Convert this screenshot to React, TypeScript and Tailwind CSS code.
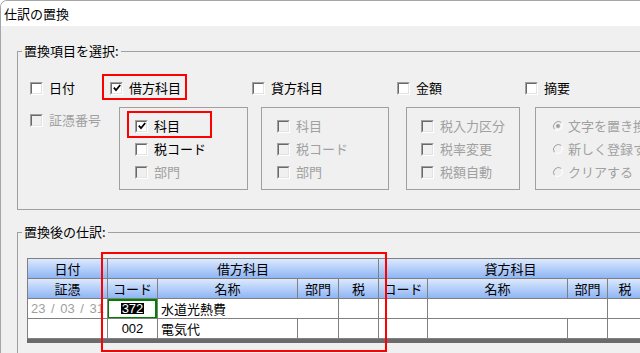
import type { ReactNode } from "react";

// ───────────────── Checkbox / radio (classic look) ─────────────────
function Box({ checked = false, disabled = false }: { checked?: boolean; disabled?: boolean }) {
  return (
    <span className="block h-[13px] w-[13px] shrink-0 border border-t-[#a0a0a0] border-l-[#a0a0a0] border-r-white border-b-white">
      <span
        className={`flex h-full w-full items-center justify-center border border-t-[#696969] border-l-[#696969] border-r-[#e3e3e3] border-b-[#e3e3e3] ${
          disabled ? "bg-[#f0f0f0]" : "bg-white"
        }`}
      >
        {checked && (
          <svg width="8" height="8" viewBox="0 0 8 8">
            <path d="M0.8 3.6 L3 6.2 L7.2 1" stroke="#000" strokeWidth="1.8" fill="none" />
          </svg>
        )}
      </span>
    </span>
  );
}

function Check({ label, checked, disabled }: { label: string; checked?: boolean; disabled?: boolean }) {
  return (
    <div className="flex h-[16px] items-center gap-[6px] whitespace-nowrap">
      <Box checked={checked} disabled={disabled} />
      <span className={disabled ? "text-[#a0a0a0]" : "text-black"}>{label}</span>
    </div>
  );
}

function Radio({ label, selected }: { label: string; selected?: boolean }) {
  return (
    <div className="flex h-[16px] items-center gap-[4px] whitespace-nowrap">
      <svg width="12" height="12" viewBox="0 0 12 12" className="shrink-0">
        <circle cx="6" cy="6" r="5" fill="#f0f0f0" />
        <path d="M2.5 9.5 A5 5 0 0 1 9.5 2.5" stroke="#a0a0a0" strokeWidth="1" fill="none" />
        <path d="M9.5 2.5 A5 5 0 0 1 2.5 9.5" stroke="#ffffff" strokeWidth="1" fill="none" />
        {selected && <circle cx="6" cy="6" r="2" fill="#a0a0a0" />}
      </svg>
      <span className="text-[#a0a0a0]">{label}</span>
    </div>
  );
}

function SubBox({ className = "", children }: { className?: string; children: ReactNode }) {
  return (
    <div className={`flex h-[83px] shrink-0 flex-col gap-[7px] border border-[#a0a0a0] pt-[10px] ${className}`}>
      {children}
    </div>
  );
}

// ───────────────── Grid cells ─────────────────
function Head({ children, span = "" }: { children?: ReactNode; span?: string }) {
  return (
    <div
      className={`flex h-[20px] items-center justify-center overflow-hidden whitespace-nowrap border-r border-b border-[#808080] bg-linear-to-b from-[#dce9fd] to-[#8fb5f4] ${span}`}
    >
      {children}
    </div>
  );
}

function Cell({ children, span = "", className = "" }: { children?: ReactNode; span?: string; className?: string }) {
  return (
    <div
      className={`relative flex h-[20px] items-center overflow-hidden whitespace-nowrap border-r border-b border-[#808080] bg-white ${span} ${className}`}
    >
      {children}
    </div>
  );
}

export default function App() {
  return (
    <div className="relative h-[353px] w-[640px] overflow-hidden rounded-tl-[7px] border-t border-l border-[#a6a6a6] bg-[#f0f0f0] font-['Noto_Sans_CJK_JP','Noto_Sans',sans-serif] text-[13px] leading-[16px] text-black">
      {/* title bar */}
      <div className="flex h-[25px] items-center bg-white pl-[3px]">仕訳の置換</div>

      {/* 置換項目を選択 */}
      <fieldset className="ml-[16px] mt-[17px] h-[167px] w-[700px] border border-[#a0a0a0]">
        <legend className="ml-[4px] px-[2px] leading-[16px]">置換項目を選択:</legend>
        <div className="pl-[12px]">
          <div className="flex pt-[21px]">
            <div className="w-[80px]">
              <Check label="日付" />
            </div>
            <div className="w-[142px]">
              <Check label="借方科目" checked />
            </div>
            <div className="w-[145px]">
              <Check label="貸方科目" />
            </div>
            <div className="w-[128px]">
              <Check label="金額" />
            </div>
            <div>
              <Check label="摘要" />
            </div>
          </div>

          <div className="mt-[11px] flex items-start">
            <div className="w-[89px] shrink-0 pt-[5px]">
              <Check label="証憑番号" disabled />
            </div>
            <SubBox className="w-[129px] pl-[15px]">
              <Check label="科目" checked />
              <Check label="税コード" />
              <Check label="部門" disabled />
            </SubBox>
            <SubBox className="ml-[13px] w-[128px] pl-[15px]">
              <Check label="科目" disabled />
              <Check label="税コード" disabled />
              <Check label="部門" disabled />
            </SubBox>
            <SubBox className="ml-[17px] w-[114px] pl-[14px]">
              <Check label="税入力区分" disabled />
              <Check label="税率変更" disabled />
              <Check label="税額自動" disabled />
            </SubBox>
            <SubBox className="ml-[15px] w-[140px] pl-[16px]">
              <Radio label="文字を置き換える" selected />
              <Radio label="新しく登録する" />
              <Radio label="クリアする" />
            </SubBox>
          </div>
        </div>
      </fieldset>

      {/* 置換後の仕訳 */}
      <fieldset className="ml-[16px] mt-[14px] h-[200px] w-[700px] border border-[#a0a0a0]">
        <legend className="ml-[4px] px-[2px] leading-[16px]">置換後の仕訳:</legend>
        <div className="pl-[9px] pt-[18px]">
          <div className="w-max">
            <div className="grid w-max grid-cols-[80px_50px_140px_41px_40px_49px_140px_40px_35px] border-t border-l border-[#808080]">
              <Head>日付</Head>
              <Head span="col-span-4">借方科目</Head>
              <Head span="col-span-4">貸方科目</Head>

              <Head>証憑</Head>
              <Head>コード</Head>
              <Head>名称</Head>
              <Head>部門</Head>
              <Head>税</Head>
              <Head>コード</Head>
              <Head>名称</Head>
              <Head>部門</Head>
              <Head>税</Head>

              <Cell className="pl-[3px] font-['Liberation_Sans',sans-serif] text-[#a0a0a0] [word-spacing:2px]">
                23 / 03 / 31
              </Cell>
              <Cell className="justify-center">
                <span className="bg-black px-px font-['Liberation_Sans',sans-serif] leading-[11px] text-white">372</span>
                <div className="absolute -top-px -right-px -bottom-[2px] -left-[2px] border-[3px] border-[#007f00]" />
              </Cell>
              <Cell span="col-span-2" className="pl-[3px]">水道光熱費</Cell>
              <Cell />
              <Cell />
              <Cell span="col-span-2" />
              <Cell />

              <Cell />
              <Cell className="justify-center font-['Liberation_Sans',sans-serif]">002</Cell>
              <Cell className="pl-[3px]">電気代</Cell>
              <Cell />
              <Cell />
              <Cell />
              <Cell />
              <Cell />
              <Cell />
            </div>
            <div className="h-[4px] bg-[#6b6b6b]" />
          </div>
        </div>
      </fieldset>

      {/* red annotation frames */}
      <div className="absolute top-[73px] left-[101px] h-[26px] w-[85px] border-2 border-[#ff0000]" />
      <div className="absolute top-[110px] left-[126px] h-[27px] w-[85px] border-2 border-[#ff0000]" />
      <div className="absolute top-[251px] left-[100px] h-[100px] w-[286px] border-2 border-[#ff0000]" />
    </div>
  );
}
